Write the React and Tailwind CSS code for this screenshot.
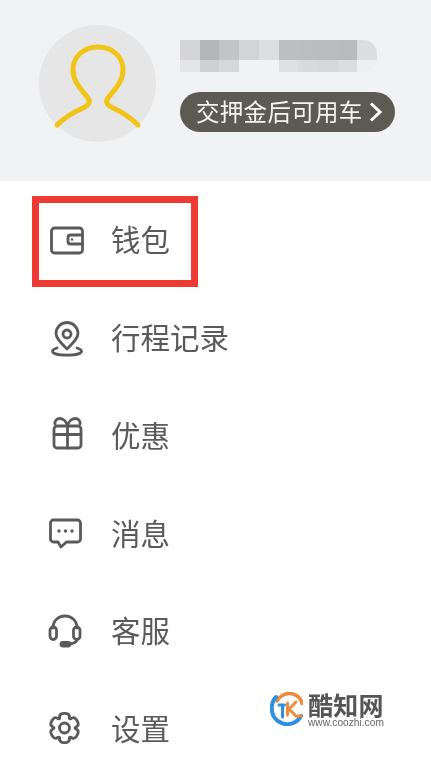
const gearPath = (() => {
  // six rounded lobes around the centre
  const cx = 15.5, cy = 17, R = 14.5, r = 10.5;
  const pt = (rad, deg) => {
    const a = (deg * Math.PI) / 180;
    return `${(cx + rad * Math.cos(a)).toFixed(2)} ${(cy + rad * Math.sin(a)).toFixed(2)}`;
  };
  let d = '';
  for (let i = 0; i < 6; i++) {
    const a = -90 + i * 60;
    d += `${i === 0 ? 'M' : 'L'}${pt(r + 0.6, a - 26)} Q${pt(R, a - 22)} ${pt(R, a - 10)} Q${pt(R + 0.4, a)} ${pt(R, a + 10)} Q${pt(R, a + 22)} ${pt(r + 0.6, a + 26)} Q${pt(r - 0.5, a + 30)} `;
    d += `${pt(r + 0.6, a + 34)} `;
  }
  return d + 'Z';
})();

const icons = {
  wallet: (
    <>
      <rect x="2.5" y="6" width="31" height="25" rx="3" />
      <path d="M33.5 13h-12a2.5 2.5 0 0 0-2.500 2.500v4a2.500 2.500 0 0 0 2.500 2.500h12" />
      <circle cx="23" cy="17.500" r="1.200" fill="#5a5a5a" stroke="none" />
    </>
  ),
  pin: (
    <>
      <path d="M18 29c-6-6-11-10.500-11-15.500a11 11 0 0 1 22 0c0 5-5 9.500-11 15.500z" />
      <circle cx="18" cy="14" r="4" />
      <path d="M8 28c-2.500 .8-4.500 1.800-4.500 3.200 0 2.500 6.500 4 14.500 4s14.500-1.500 14.500-4c0-1.400-2-2.400-4.500-3.200" />
    </>
  ),
  gift: (
    <>
      <rect x="5" y="9" width="27" height="22" rx="3" />
      <path d="M5 17.500h27M18.500 9v22" />
      <path d="M18.500 9c-1-4-4-7.500-7.500-7.500-3.500 0-5.500 2.500-5 5.500M18.500 9c1-4 4-7.500 7.500-7.500 3.500 0 5.500 2.500 5 5.500" />
    </>
  ),
  message: (
    <>
      <path d="M4.500 5h24a3 3 0 0 1 3 3v16a3 3 0 0 1-3 3H17.500l-5.500 5-3-5H4.500a3 3 0 0 1-3-3V8a3 3 0 0 1 3-3z" />
      <circle cx="10" cy="16" r="1.700" fill="#5a5a5a" stroke="none" />
      <circle cx="16.500" cy="16" r="1.700" fill="#5a5a5a" stroke="none" />
      <circle cx="23" cy="16" r="1.700" fill="#5a5a5a" stroke="none" />
    </>
  ),
  headset: (
    <>
      <path d="M4 15c0-7 5-12 12-12s12 5 12 12" />
      <rect x="1" y="14" width="6.500" height="12.500" rx="3.200" />
      <rect x="24.500" y="14" width="6.500" height="12.500" rx="3.200" />
      <path d="M28 26.500c0 2.500-4 4.500-9 4.500" />
      <rect x="12" y="29.500" width="9" height="3.500" rx="1.750" fill="#5a5a5a" />
    </>
  ),
  gear: (
    <>
      <path d={gearPath} />
      <circle cx="15.500" cy="17" r="5" />
    </>
  ),
};

const menu = [
  { label: '钱包', icon: 'wallet' },
  { label: '行程记录', icon: 'pin' },
  { label: '优惠', icon: 'gift' },
  { label: '消息', icon: 'message' },
  { label: '客服', icon: 'headset' },
  { label: '设置', icon: 'gear' },
];

// mosaic over the hidden phone number
const blurTop = ['bg-[#d5d5d7]', 'bg-[#b4b5b7]', 'bg-[#c3c4c6]', 'bg-[#d3d4d6]', 'bg-[#dddee0]', 'bg-[#bdbec0]', 'bg-[#bcbdc0]', 'bg-[#bbbcbf]', 'bg-[#b9babd]', 'bg-[#dcdde0]'];
const blurBottom = ['bg-[#e4e5e7]', 'bg-[#cfd0d2]', 'bg-[#d6d7d9]', 'bg-[#f1f2f4]', 'bg-[#f1f2f4]', 'bg-[#dfe0e2]', 'bg-[#d9dadc]', 'bg-[#d6d7d9]', 'bg-[#dcdde0]', 'bg-[#eeeff1]'];

function MenuRow({ item }) {
  return (
    <div className="flex h-[97.8px] items-center pl-[49px]">
      <svg
        width="36"
        height="36"
        viewBox="0 0 36 36"
        fill="none"
        stroke="#5a5a5a"
        strokeWidth="2.800"
        strokeLinecap="round"
        strokeLinejoin="round"
        className="shrink-0 overflow-visible"
      >
        {icons[item.icon]}
      </svg>
      <span className="ml-[26px] -mt-[2px] text-[29.500px] leading-none text-[#5a5a5a]">{item.label}</span>
    </div>
  );
}

export default function App() {
  return (
    <div className="relative h-[764px] w-[431px] overflow-hidden bg-white font-['Noto_Sans_CJK_SC',sans-serif] blur-[0.4px]">
      {/* Header */}
      <div className="flex h-[181px] items-start bg-[#f1f2f4] pl-[39px] pt-[25px]">
        <div className="h-[117px] w-[117px] shrink-0 rounded-full bg-[#e6e6e6]">
          <svg width="117" height="117" viewBox="0 0 117 117" fill="none" stroke="#f0c419" strokeWidth="5" strokeLinecap="round" strokeLinejoin="round">
            <path d="M18 100C25 93 35 87 44 83C50 80 52 77 49 73C41 63 34 56 34 45C34 31 45 22 59 22S84 31 84 45C84 56 77 63 69 73C66 77 68 80 74 83C83 87 92 93 99 100" />
          </svg>
        </div>
        <div className="ml-[24px] flex flex-col pt-[15px]">
          <div className="flex h-[32px] w-[197px] flex-col overflow-hidden rounded-r-[14px]">
            <div className="flex h-[20px]">
              {blurTop.map((c, i) => <div key={i} className={`h-full w-[20px] ${c}`} />)}
            </div>
            <div className="flex h-[12px]">
              {blurBottom.map((c, i) => <div key={i} className={`h-full w-[20px] ${c}`} />)}
            </div>
          </div>
          <div className="mt-[20px] flex h-[40px] w-[215px] items-center rounded-full bg-[#5c5a52] pl-[16px]">
            <span className="text-[23.500px] leading-none tracking-[0.3px] text-[#f4f4f0]">交押金后可用车</span>
            <svg width="13" height="20" viewBox="0 0 13 20" fill="none" stroke="#ffffff" strokeWidth="3" className="ml-[6px]">
              <path d="M2 1.500l9 8.500-9 8.500" />
            </svg>
          </div>
        </div>
      </div>

      {/* Menu */}
      <div className="flex flex-col pt-[10px]">
        {menu.map(item => <MenuRow key={item.icon} item={item} />)}
      </div>

      {/* Red highlight */}
      <div className="absolute left-[32px] top-[196px] h-[91px] w-[166px] border-[7px] border-[#ef3a33]" />

      {/* Watermark */}
      <div className="absolute left-[270px] top-[692px] flex items-start">
        <svg width="33" height="34" viewBox="0 0 33 34" fill="none" strokeLinecap="round">
          <path d="M7 9C10 3.500 17 0 23 2c5 1.500 8 5 9 9.500" stroke="#f08a3c" strokeWidth="3.500" />
          <path d="M6 5C1 10 .5 19 4 25c4 6 12 9 19 6 3-1 6-3.500 8-7" stroke="#2f8fe0" strokeWidth="4" />
          <path d="M9 13h5.500M12.500 13v12" stroke="#2f8fe0" strokeWidth="3" />
          <path d="M17.500 11v12" stroke="#f08a3c" strokeWidth="3" />
          <path d="M26 10l-7 7 7 7h5" stroke="#f08a3c" strokeWidth="3" />
        </svg>
        <div className="ml-[5px] flex flex-col">
          <span className="text-[25px] font-bold leading-[24px] tracking-[0.2px] text-[#555555]">酷知网</span>
          <span className="mt-[1px] font-['Liberation_Sans',sans-serif] text-[10.200px] leading-[11px] text-[#666666]">www.coozhi.com</span>
        </div>
      </div>
    </div>
  );
}
